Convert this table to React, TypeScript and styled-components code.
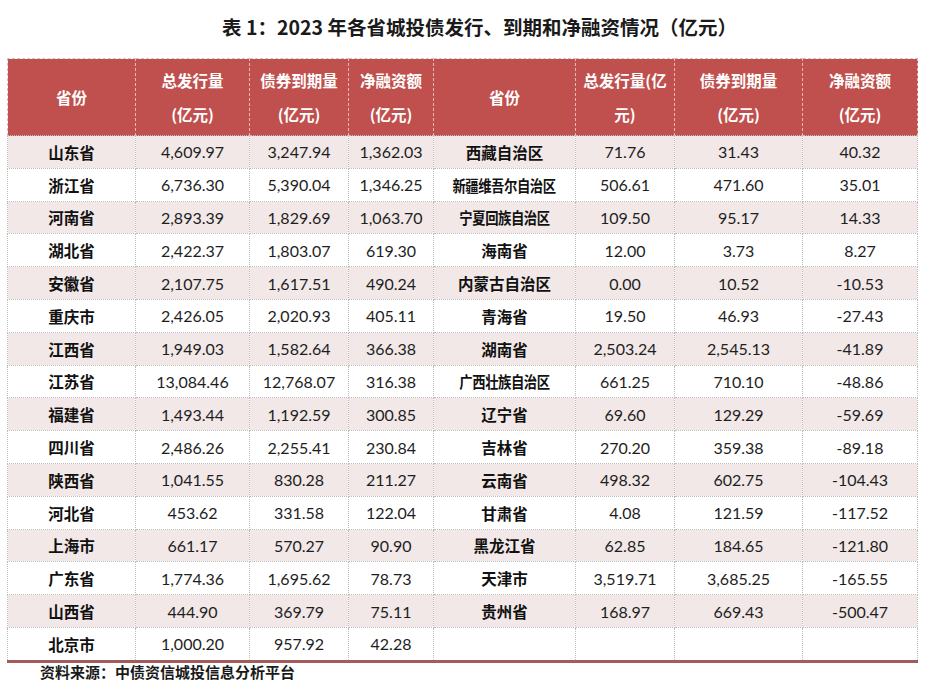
import React from "react";
import styled, { createGlobalStyle } from "styled-components";

const Global = createGlobalStyle`
  html, body { margin: 0; padding: 0; background: #ffffff; }
  body { font-family: Lato, "Noto Sans CJK SC", sans-serif; color: #1a1a1a; }
`;

const Page = styled.div`
  width: 925px;
  height: 696px;
  display: flex;
  flex-direction: column;
  background: #fff;
`;

const Title = styled.h1`
  margin: 0;
  height: 58px;
  display: flex;
  align-items: center;
  justify-content: center;
  padding-left: 34px;
  padding-bottom: 5px;
  box-sizing: border-box;
  font-family: "Noto Sans CJK SC", sans-serif;
  font-weight: 700;
  font-size: 19.5px;
  color: #1a1a1a;
`;

const TableWrap = styled.div`
  padding-left: 7px;
`;

const Table = styled.table`
  border-collapse: collapse;
  table-layout: fixed;
  width: 910px;
  border-bottom: 3px solid #a25c5c;
`;

const HeadCell = styled.th`
  background: #c0504d;
  color: #ffffff;
  font-family: "Noto Sans CJK SC", sans-serif;
  font-weight: 700;
  font-size: 15.5px;
  line-height: 34px;
  height: 76px;
  padding: 0;
  text-align: center;
  vertical-align: middle;
  border-left: 1px dashed #e8b8b6;
  border-right: 1px dashed #e8b8b6;
  border-top: 1px dashed #c9c9c9;
  white-space: nowrap;
`;

const Row = styled.tr<{ $shaded: boolean }>`
  background: ${(p) => (p.$shaded ? "#f1e8e7" : "#ffffff")};
`;

const Cell = styled.td`
  height: 31.8px;
  padding: 0;
  text-align: center;
  vertical-align: middle;
  border: 1px dotted #bdbdbd;
  font-family: Lato, "Noto Sans", sans-serif;
  font-size: 16px;
  color: #1e1e1e;
  white-space: nowrap;
  overflow: hidden;
`;

const NameCell = styled(Cell)`
  font-family: "Noto Sans CJK SC", sans-serif;
  font-weight: 700;
  font-size: 15.5px;
  color: #111;
`;

const Name = styled.span<{ $condensed: boolean }>`
  display: inline-block;
  transform: ${(p) => (p.$condensed ? "scaleX(0.86)" : "none")};
  letter-spacing: ${(p) => (p.$condensed ? "-0.5px" : "0")};
`;

const Footer = styled.div`
  padding: 1px 0 0 40px;
  font-family: "Noto Sans CJK SC", sans-serif;
  font-weight: 700;
  font-size: 15px;
  line-height: 16px;
  color: #1a1a1a;
`;

type R = [string, string, string, string];

const left: R[] = [
  ["山东省", "4,609.97", "3,247.94", "1,362.03"],
  ["浙江省", "6,736.30", "5,390.04", "1,346.25"],
  ["河南省", "2,893.39", "1,829.69", "1,063.70"],
  ["湖北省", "2,422.37", "1,803.07", "619.30"],
  ["安徽省", "2,107.75", "1,617.51", "490.24"],
  ["重庆市", "2,426.05", "2,020.93", "405.11"],
  ["江西省", "1,949.03", "1,582.64", "366.38"],
  ["江苏省", "13,084.46", "12,768.07", "316.38"],
  ["福建省", "1,493.44", "1,192.59", "300.85"],
  ["四川省", "2,486.26", "2,255.41", "230.84"],
  ["陕西省", "1,041.55", "830.28", "211.27"],
  ["河北省", "453.62", "331.58", "122.04"],
  ["上海市", "661.17", "570.27", "90.90"],
  ["广东省", "1,774.36", "1,695.62", "78.73"],
  ["山西省", "444.90", "369.79", "75.11"],
  ["北京市", "1,000.20", "957.92", "42.28"],
];

const right: R[] = [
  ["西藏自治区", "71.76", "31.43", "40.32"],
  ["新疆维吾尔自治区", "506.61", "471.60", "35.01"],
  ["宁夏回族自治区", "109.50", "95.17", "14.33"],
  ["海南省", "12.00", "3.73", "8.27"],
  ["内蒙古自治区", "0.00", "10.52", "-10.53"],
  ["青海省", "19.50", "46.93", "-27.43"],
  ["湖南省", "2,503.24", "2,545.13", "-41.89"],
  ["广西壮族自治区", "661.25", "710.10", "-48.86"],
  ["辽宁省", "69.60", "129.29", "-59.69"],
  ["吉林省", "270.20", "359.38", "-89.18"],
  ["云南省", "498.32", "602.75", "-104.43"],
  ["甘肃省", "4.08", "121.59", "-117.52"],
  ["黑龙江省", "62.85", "184.65", "-121.80"],
  ["天津市", "3,519.71", "3,685.25", "-165.55"],
  ["贵州省", "168.97", "669.43", "-500.47"],
  ["", "", "", ""],
];

const widths = [128, 114, 99, 85, 142, 99, 128, 115];

const Group = ({ r }: { r: R }) => (
  <>
    <NameCell>
      <Name $condensed={r[0].length >= 7}>{r[0]}</Name>
    </NameCell>
    <Cell>{r[1]}</Cell>
    <Cell>{r[2]}</Cell>
    <Cell>{r[3]}</Cell>
  </>
);

export default function App() {
  return (
    <Page>
      <Global />
      <Title>表 1：2023 年各省城投债发行、到期和净融资情况（亿元）</Title>
      <TableWrap>
        <Table>
          <colgroup>
            {widths.map((w, i) => (
              <col key={i} style={{ width: w }} />
            ))}
          </colgroup>
          <thead>
            <tr>
              <HeadCell>省份</HeadCell>
              <HeadCell>总发行量<br />(亿元)</HeadCell>
              <HeadCell>债券到期量<br />(亿元)</HeadCell>
              <HeadCell>净融资额<br />(亿元)</HeadCell>
              <HeadCell>省份</HeadCell>
              <HeadCell>总发行量(亿<br />元)</HeadCell>
              <HeadCell>债券到期量<br />(亿元)</HeadCell>
              <HeadCell>净融资额<br />(亿元)</HeadCell>
            </tr>
          </thead>
          <tbody>
            {left.map((l, i) => (
              <Row key={i} $shaded={i % 2 === 0 && i < 15}>
                <Group r={l} />
                <Group r={right[i]} />
              </Row>
            ))}
          </tbody>
        </Table>
      </TableWrap>
      <Footer>资料来源：中债资信城投信息分析平台</Footer>
    </Page>
  );
}
